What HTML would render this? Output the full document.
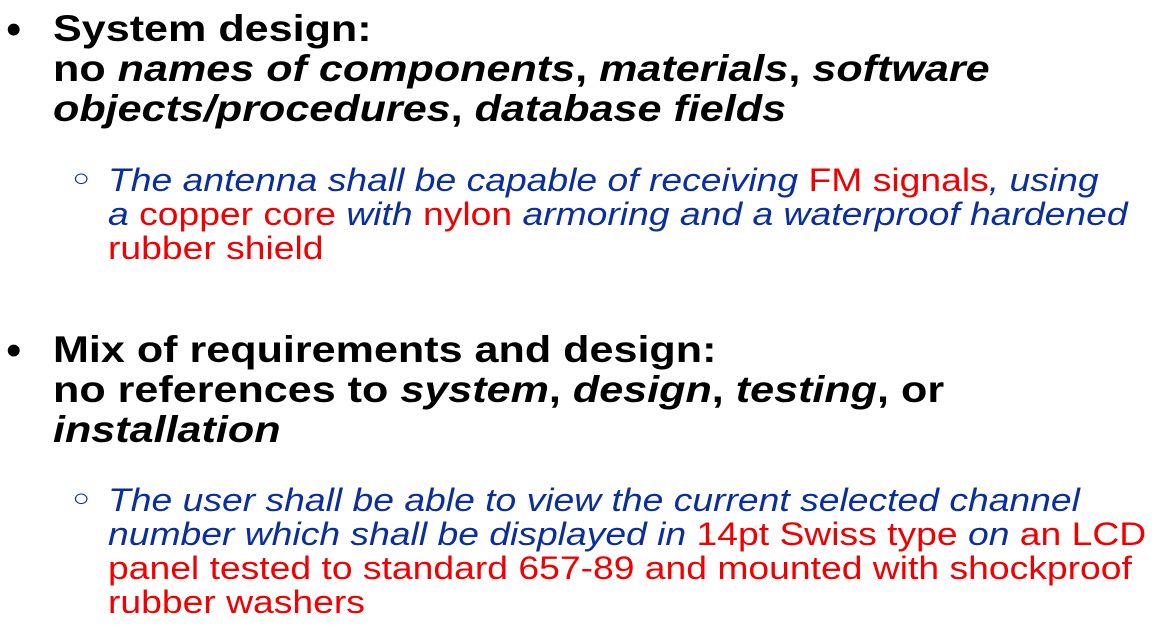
<!DOCTYPE html>
<html><head><meta charset="utf-8"><style>
html,body{margin:0;padding:0;background:#fff;width:1157px;height:629px;overflow:hidden;position:relative;font-family:"Liberation Sans",sans-serif}
.l{position:absolute;white-space:nowrap;line-height:1;transform:scaleX(1.165);transform-origin:0 0}
.m{font-size:37px;font-weight:bold;color:#000;left:53px}
.m i{font-style:italic}
.s{font-size:32px;left:108px;color:#0a2f9c;font-style:italic}
.r{color:#f00000;font-style:normal}
.b{position:absolute;font-size:44px;left:6px;line-height:1}
.o{position:absolute;font-size:24px;left:74px;line-height:1;color:#0a2f9c;transform:scaleX(1.2)}
</style></head><body>
<div class="b" style="top:8px">•</div>
<div class="l m" style="top:10px">System design:</div>
<div class="l m" style="top:50px">no <i>names of components</i>, <i>materials</i>, <i>software</i></div>
<div class="l m" style="top:90px"><i>objects/procedures</i>, <i>database fields</i></div>
<div class="o" style="top:167px">○</div>
<div class="l s" style="top:164px">The antenna shall be capable of receiving <span class="r">FM signals</span>, using</div>
<div class="l s" style="top:198px">a <span class="r">copper core</span> with <span class="r">nylon</span> armoring and a waterproof hardened</div>
<div class="l s" style="top:232px"><span class="r">rubber shield</span></div>
<div class="b" style="top:329px">•</div>
<div class="l m" style="top:331px">Mix of requirements and design:</div>
<div class="l m" style="top:371px">no references to <i>system</i>, <i>design</i>, <i>testing</i>, or</div>
<div class="l m" style="top:411px"><i>installation</i></div>
<div class="o" style="top:487px">○</div>
<div class="l s" style="top:484px">The user shall be able to view the current selected channel</div>
<div class="l s" style="top:518px">number which shall be displayed in <span class="r">14pt Swiss type</span> on <span class="r">an LCD</span></div>
<div class="l s" style="top:552px"><span class="r">panel tested to standard 657-89 and mounted with shockproof</span></div>
<div class="l s" style="top:586px"><span class="r">rubber washers</span></div>
</body></html>
